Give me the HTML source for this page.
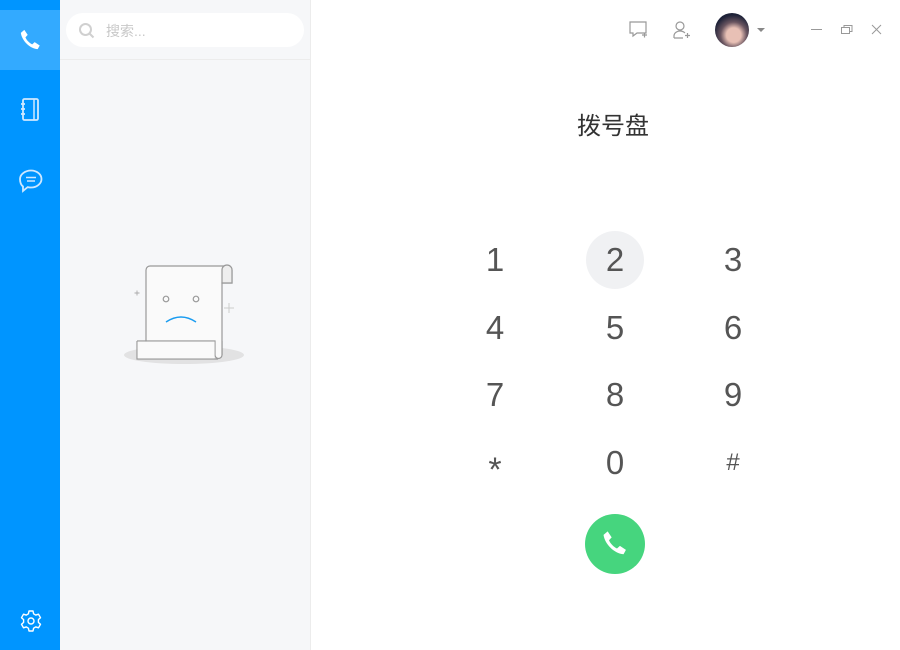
<!DOCTYPE html>
<html><head><meta charset="utf-8"><style>
*{margin:0;padding:0;box-sizing:border-box}
body{width:900px;height:650px;overflow:hidden;background:#fff;font-family:"Liberation Sans","Noto Sans CJK SC",sans-serif;position:relative}
.side{position:absolute;left:0;top:0;width:60px;height:650px;background:#0095ff}
.act{position:absolute;left:0;top:10px;width:60px;height:60px;background:#33aaff}
.mid{position:absolute;left:60px;top:0;width:251px;height:650px;background:#f6f7f9;border-right:1px solid #ececec}
.search{position:absolute;left:6px;top:13px;width:238px;height:34px;background:#fff;border-radius:17px}
.search span{position:absolute;left:40px;top:8px;font-size:14px;color:#c8c8c8}
.line{position:absolute;left:0;top:59px;width:250px;height:1px;background:#ececec}
.d{position:absolute;width:60px;height:60px;margin-left:-30px;margin-top:-30px;text-align:center;line-height:60px;font-size:33px;color:#555}
.title{position:absolute;left:577px;top:106px;font-size:24px;color:#333}
</style></head><body>
<div class="side"><div class="act"></div>
<svg style="position:absolute;left:17px;top:27px" width="27" height="27" viewBox="0 0 24 24"><path d="M6.5 2.5l3 4.5-2 2.2c1 2.5 3.5 5 6 6.2l2.2-2 4.5 3-1.8 3.3c-7-.5-14-7.5-15-14.5z" fill="#fff"/></svg>
<svg style="position:absolute;left:19px;top:97px" width="22" height="26" viewBox="0 0 22 26"><rect x="4" y="2" width="15" height="21" rx="1.5" fill="none" stroke="#cfe8ff" stroke-width="1.8"/><line x1="15" y1="2" x2="15" y2="23" stroke="#cfe8ff" stroke-width="1.5"/><path d="M2 7h4M2 12h4M2 17h4" stroke="#cfe8ff" stroke-width="1.8"/></svg>
<svg style="position:absolute;left:18px;top:168px" width="26" height="26" viewBox="0 0 26 26"><path d="M13 2.5c6 0 10.5 4 10.5 8.5s-4.5 8.5-10.5 8.5c-1.2 0-2.3-.1-3.3-.4L5 23v-4.5C3 17 2 14.5 2 11 2 6.5 7 2.5 13 2.5z" fill="none" stroke="#cfe8ff" stroke-width="1.8"/><path d="M8 9.5h10M9 13h8" stroke="#cfe8ff" stroke-width="1.6"/></svg>
<svg style="position:absolute;left:19px;top:609px" width="24" height="24" viewBox="0 0 24 24"><path d="M10 2h4l.6 2.8 2.2 1.3 2.7-.9 2 3.5-2.1 1.9v2.8l2.1 1.9-2 3.5-2.7-.9-2.2 1.3L14 22h-4l-.6-2.8-2.2-1.3-2.7.9-2-3.5 2.1-1.9V10.6L2.5 8.7l2-3.5 2.7.9 2.2-1.3z" fill="none" stroke="#fff" stroke-width="1.4" stroke-linejoin="round"/><circle cx="12" cy="12" r="3" fill="none" stroke="#fff" stroke-width="1.4"/></svg>
</div>
<div class="mid">
<div class="search"><svg style="position:absolute;left:12px;top:9px" width="18" height="18" viewBox="0 0 18 18"><circle cx="7.5" cy="7.5" r="5.5" fill="none" stroke="#d0d0d0" stroke-width="2"/><path d="M11.5 11.5l4 4" stroke="#d0d0d0" stroke-width="2"/></svg><span>搜索...</span></div>
<div class="line"></div>
</div>
<svg style="position:absolute;left:100px;top:250px" width="160" height="130" viewBox="0 0 160 130">
<ellipse cx="84" cy="105" rx="60" ry="9" fill="#e2e2e3"/>
<path d="M46 98V20a4 4 0 0 1 4-4H128a4 4 0 0 1 4 4V33H122V105" fill="#fafafa" stroke="#999" stroke-width="1.2"/>
<path d="M122 33V20a5 5 0 0 1 10 0V33z" fill="#eee" stroke="#999" stroke-width="1.2"/>
<path d="M37 91H115V105a3.5 3.5 0 0 0 7 0V91" fill="#fafafa" stroke="#999" stroke-width="1.2"/>
<path d="M37 91V109H118" fill="none" stroke="#999" stroke-width="1.2"/>
<rect x="37.6" y="91.6" width="77" height="16.8" fill="#fafafa"/>
<circle cx="66" cy="49" r="2.8" fill="none" stroke="#999" stroke-width="1.2"/><circle cx="96" cy="49" r="2.8" fill="none" stroke="#999" stroke-width="1.2"/>
<path d="M66 72q15-10 30 0" fill="none" stroke="#1a9cf0" stroke-width="1.5"/>
<path d="M34.5 43h5M37 40.5v5" stroke="#aaa" stroke-width="0.9"/>
<path d="M124 58h10M129 53v10" stroke="#ccc" stroke-width="1"/>
</svg>
<svg style="position:absolute;left:629px;top:21px" width="20" height="18" viewBox="0 0 20 18"><path d="M1 1h16v11H8l-4 3v-3H1z" fill="none" stroke="#999" stroke-width="1.2"/><path d="M13 14h5M15.5 11.5v5" stroke="#999" stroke-width="1.2"/></svg>
<svg style="position:absolute;left:672px;top:20px" width="20" height="20" viewBox="0 0 20 20"><circle cx="8" cy="6" r="4" fill="none" stroke="#999" stroke-width="1.2"/><path d="M2 18v-2c0-3 3-5 6-5s4 1 5 2M2 18h9" fill="none" stroke="#999" stroke-width="1.2"/><path d="M13 15.5h5M15.5 13v5" stroke="#999" stroke-width="1.2"/></svg>
<div style="position:absolute;left:715px;top:13px;width:34px;height:34px;border-radius:50%;background:radial-gradient(circle at 55% 65%,#e8c0b5 0 25%,#6a5560 45%,#1e2238 70%)"></div>
<div style="position:absolute;left:757px;top:28px;border-left:4px solid transparent;border-right:4px solid transparent;border-top:4px solid #888"></div>
<div style="position:absolute;left:811px;top:29px;width:11px;height:1px;background:#999"></div>
<svg style="position:absolute;left:841px;top:24px" width="12" height="11" viewBox="0 0 12 11"><rect x="0.5" y="3.5" width="8" height="6" fill="none" stroke="#999"/><path d="M3 3.5V1.5h8v6H8.5" fill="none" stroke="#999"/></svg>
<svg style="position:absolute;left:871px;top:24px" width="11" height="11" viewBox="0 0 11 11"><path d="M1 1l9 9M10 1l-9 9" stroke="#999" stroke-width="1"/></svg>
<div class="title">拨号盘</div>
<div style="position:absolute;left:586px;top:231px;width:58px;height:58px;border-radius:50%;background:#f0f1f3"></div>
<div class="d" style="left:495px;top:260px">1</div><div class="d" style="left:615px;top:260px">2</div><div class="d" style="left:733px;top:260px">3</div>
<div class="d" style="left:495px;top:328px">4</div><div class="d" style="left:615px;top:328px">5</div><div class="d" style="left:733px;top:328px">6</div>
<div class="d" style="left:495px;top:395px">7</div><div class="d" style="left:615px;top:395px">8</div><div class="d" style="left:733px;top:395px">9</div>
<div class="d" style="left:495px;top:470px;font-size:34px">*</div><div class="d" style="left:615px;top:463px">0</div><div class="d" style="left:733px;top:463px;font-size:24px">#</div>
<div style="position:absolute;left:585px;top:514px;width:60px;height:60px;border-radius:50%;background:#46d57e"></div>
<svg style="position:absolute;left:599px;top:528px" width="32" height="32" viewBox="0 0 24 24"><path d="M6.5 2.5l3 4.5-2 2.2c1 2.5 3.5 5 6 6.2l2.2-2 4.5 3-1.8 3.3c-7-.5-14-7.5-15-14.5z" fill="#fff"/></svg>
</body></html>
